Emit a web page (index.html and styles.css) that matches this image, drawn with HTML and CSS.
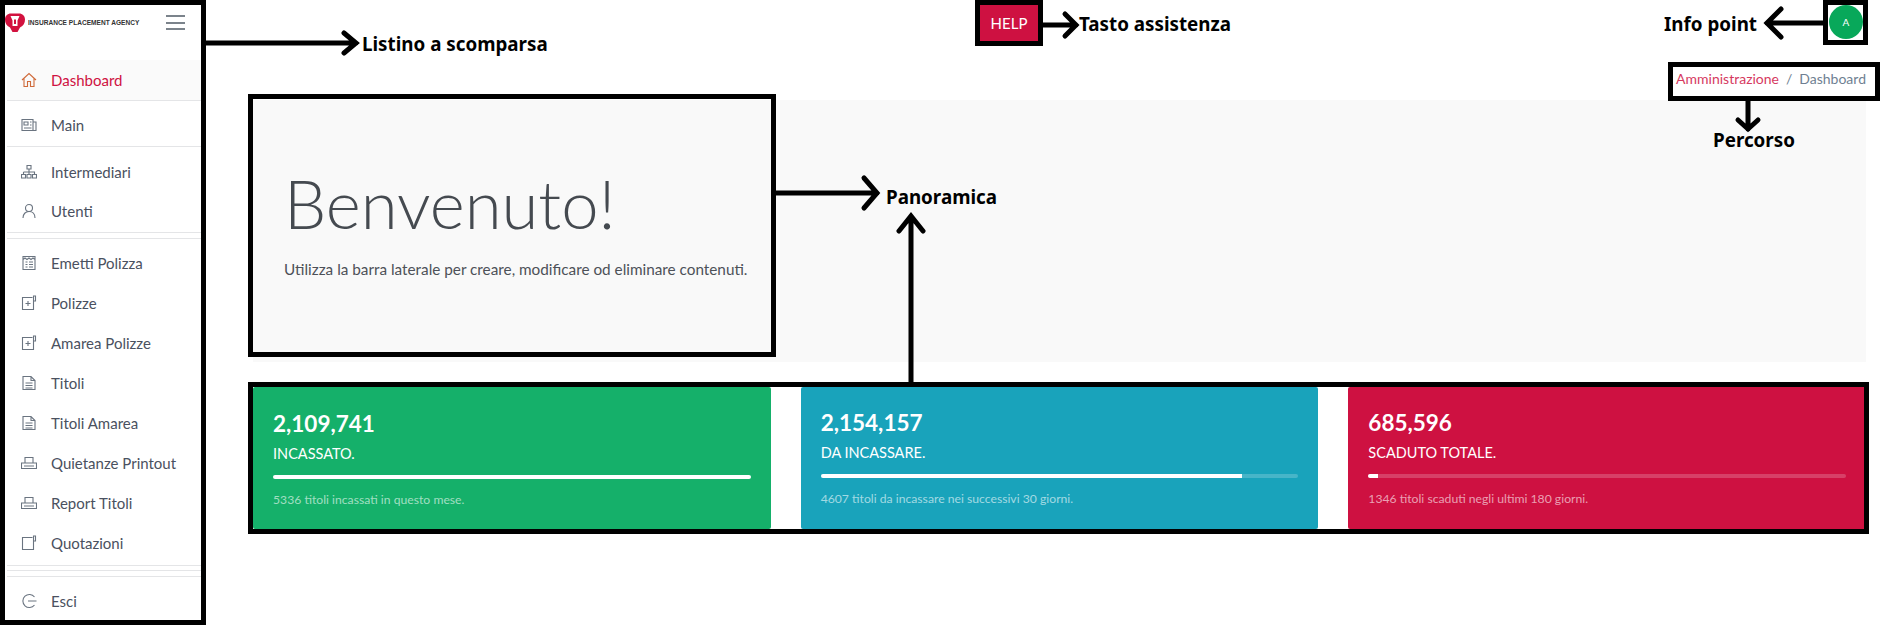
FILE: index.html
```html
<!DOCTYPE html>
<html lang="it">
<head>
  <meta charset="UTF-8" />
  <title>Dashboard</title>
  <link rel="stylesheet" href="styles.css">
</head>
<body>

  <div class="app">
    <aside class="sidebar">
      <div class="brand">
        <svg class="brand-logo" viewBox="0 0 20 20"><path fill="#d2123f" d="M6 .5h8c3.500 0 6 2.500 6 6 0 3.500-1.500 6.500-5 8l-2.500 4.500h-5L5 14.500c-3.500-1.500-5-4.500-5-8 0-3.500 2.500-6 6-6z"/><path fill="#fff" d="M5.500 3h9l-2 4.500V13h-5V7.500z"/><path fill="#d2123f" d="M9 6.500h2V11H9z"/></svg>
        <span class="brand-name">INSURANCE PLACEMENT AGENCY</span>
        <span class="burger"><i></i><i></i><i></i></span>
      </div>

      <nav class="menu">
        <a class="item active section-end">
          <svg class="icon" viewBox="0 0 16 16"><path d="M1 8l7-6.500L15 8M3 6.500V14.500h3.500V9.500h3V14.500H13V6.500"/></svg>
          Dashboard
        </a>
        <a class="item main section-end">
          <svg class="icon" viewBox="0 0 16 16"><path d="M1 2.500h11v11H1zM12 5h3v8.500h-3M3 5h4v3H3zM9 5h1.500M9 8h1.500M3 11h7.500"/></svg>
          Main
        </a>
        <a class="item users-first">
          <svg class="icon" viewBox="0 0 16 16"><path d="M6 1.500h4v3.500H6zM8 5v3M2.500 8h11v2M2.500 8v2M8 8v2M.5 10.500h4v3.500h-4zM6 10.500h4v3.500H6zM11.500 10.500h4v3.500h-4z"/></svg>
          Intermediari
        </a>
        <a class="item users-last section-end">
          <svg class="icon" viewBox="0 0 16 16"><circle cx="8" cy="5" r="3.500"/><path d="M2 15c0-4 2.500-6.500 6-6.500s6 2.500 6 6.500"/></svg>
          Utenti
        </a>
        <div class="rule"></div>
        <a class="item first">
          <svg class="icon" viewBox="0 0 16 16"><path d="M2 1.500h12v13H2zM2 4.500l2-1.500 2 1.500 2-1.500 2 1.500 2-1.500 2 1.500M4.500 7h2M8 7h4M4.500 9.500h2M8 9.500h4M4.500 12h2M8 12h4"/></svg>
          Emetti Polizza
        </a>
        <a class="item">
          <svg class="icon" viewBox="0 0 16 16"><path d="M11.500 2.500h-10v12h11V6M12.500 1h2v5h-2zM7 6v5M4.500 8.500h5"/></svg>
          Polizze
        </a>
        <a class="item">
          <svg class="icon" viewBox="0 0 16 16"><path d="M11.500 2.500h-10v12h11V6M12.500 1h2v5h-2zM7 6v5M4.500 8.500h5"/></svg>
          Amarea Polizze
        </a>
        <a class="item">
          <svg class="icon" viewBox="0 0 16 16"><path d="M2 1.500h8l4 4v9H2zM10 1.500v4h4M4.500 8h7M4.500 10.500h7M4.500 13h7"/></svg>
          Titoli
        </a>
        <a class="item">
          <svg class="icon" viewBox="0 0 16 16"><path d="M2 1.500h8l4 4v9H2zM10 1.500v4h4M4.500 8h7M4.500 10.500h7M4.500 13h7"/></svg>
          Titoli Amarea
        </a>
        <a class="item">
          <svg class="icon" viewBox="0 0 16 16"><path d="M4 8V2.500h8V8M.5 8h15v5.500H.5zM3 11h10"/></svg>
          Quietanze Printout
        </a>
        <a class="item">
          <svg class="icon" viewBox="0 0 16 16"><path d="M4 8V2.500h8V8M.5 8h15v5.500H.5zM3 11h10"/></svg>
          Report Titoli
        </a>
        <a class="item">
          <svg class="icon" viewBox="0 0 16 16"><path d="M11.500 2.500h-10v12h11V6M12.500 1h2v5h-2z"/></svg>
          Quotazioni
        </a>
        <div class="rule r-a"></div>
        <div class="rule r-b"></div>
        <div class="rule r-c"></div>
        <a class="item logout">
          <svg class="icon" viewBox="0 0 16 16"><path d="M13.500 4A6.500 6.500 0 1 0 13.500 12M7 8h8.500"/></svg>
          Esci
        </a>
      </nav>
    </aside>

    <div class="page">
      <header class="topbar">
        <button class="help">HELP</button>
        <span class="avatar">A</span>
      </header>

      <ol class="crumbs">
        <li class="crumb-link">Amministrazione</li>
        <li class="crumb-sep">/</li>
        <li>Dashboard</li>
      </ol>

      <section class="jumbo">
        <h1>Benvenuto!</h1>
        <p>Utilizza la barra laterale per creare, modificare od eliminare contenuti.</p>
      </section>

      <section class="stats">
        <div class="stat green">
          <div class="stat-value">2,109,741</div>
          <div class="stat-label">INCASSATO.</div>
          <div class="bar"><div class="bar-fill" style="width: 100%"></div></div>
          <small>5336 titoli incassati in questo mese.</small>
        </div>
        <div class="stat blue">
          <div class="stat-value">2,154,157</div>
          <div class="stat-label">DA INCASSARE.</div>
          <div class="bar"><div class="bar-fill" style="width: 88.3%"></div></div>
          <small>4607 titoli da incassare nei successivi 30 giorni.</small>
        </div>
        <div class="stat red">
          <div class="stat-value">685,596</div>
          <div class="stat-label">SCADUTO TOTALE.</div>
          <div class="bar"><div class="bar-fill" style="width: 2%"></div></div>
          <small>1346 titoli scaduti negli ultimi 180 giorni.</small>
        </div>
      </section>
    </div>
  </div>

  <!-- annotation layer drawn over the screenshot -->
  <div class="mark mark-sidebar"></div>
  <div class="mark mark-help"></div>
  <div class="mark mark-avatar"></div>
  <div class="mark mark-crumbs"></div>
  <div class="mark mark-jumbo"></div>
  <div class="mark mark-stats"></div>

  <svg class="arrows" width="1880" height="625" viewBox="0 0 1880 625">
    <path d="M206 43H356M344 33l12 10-12 10"/>
    <path d="M1043 25H1076M1065 14l11 11-11 11"/>
    <path d="M1823 23H1767M1781 9l-14 14 14 14"/>
    <path d="M1748 100V129M1738 120l10 9 10-9"/>
    <path d="M776 193H877M864 178l13 15-13 15"/>
    <path d="M911 382V216M899 231l12-15 12 15"/>
  </svg>

  <span class="note note-sidebar">Listino a scomparsa</span>
  <span class="note note-help">Tasto assistenza</span>
  <span class="note note-info">Info point</span>
  <span class="note note-path">Percorso</span>
  <span class="note note-jumbo">Panoramica</span>

</body>
</html>
```

FILE: styles.css
```css
* {
  box-sizing: border-box;
}

html, body {
  margin: 0;
  height: 625px;
  overflow: hidden;
}

body {
  position: relative;
  font-family: Lato, "Noto Sans", Arial, sans-serif;
  color: #4a5160;
  background: #fff;
}

.app {
  display: flex;
  height: 625px;
}

/* sidebar */
.sidebar {
  width: 206px;
  flex: none;
  padding-left: 7px;
}

.brand {
  display: flex;
  align-items: center;
  height: 60px;
  margin-left: -2px;
  padding-bottom: 15px;
}

.brand-logo {
  width: 20px;
  height: 20px;
  flex: none;
}

.brand-name {
  width: 115px;
  margin-left: 3px;
  font-family: "Liberation Sans", Arial, sans-serif;
  font-size: 8px;
  font-weight: 700;
  color: #333;
  white-space: nowrap;
  transform-origin: left center;
  transform: scaleX(.82);
}

.burger {
  display: flex;
  flex-direction: column;
  gap: 4.500px;
  width: 19px;
  margin-left: 23px;
}

.burger i {
  display: block;
  height: 2px;
  background: #7b838b;
}

.menu {
  display: flex;
  flex-direction: column;
  width: 199px;
}

.item {
  display: flex;
  align-items: center;
  gap: 14px;
  height: 40px;
  padding-left: 14px;
  font-size: 15px;
  color: #4a5160;
  white-space: nowrap;
}

.item .icon {
  width: 16px;
  height: 16px;
  flex: none;
  fill: none;
  stroke: #6a7480;
  stroke-width: 1.1;
}

.item.active {
  height: 41px;
  background: #fafafa;
  color: #cf1242;
}

.item.active .icon {
  stroke: #cf6a3a;
}

.section-end {
  border-bottom: 1px solid #e4e5e7;
}

.item.main {
  height: 46px;
  padding-top: 2px;
}

.users-first {
  height: 50px;
}

.users-last {
  height: 36px;
  padding-bottom: 8px;
}

.rule {
  height: 1px;
  margin-top: 5px;
  background: #e4e5e7;
}

.item.first {
  margin-top: 4px;
}

.rule.r-a {
  margin-top: 2px;
}

.rule.r-b {
  margin-top: 4px;
}

.item.logout {
  height: 48px;
}

/* main column */
.page {
  flex: 1;
  min-width: 0;
  padding: 0 14px 0 47px;
}

.topbar {
  position: relative;
  height: 62px;
}

.help {
  position: absolute;
  left: 727px;
  top: 5px;
  width: 58px;
  height: 36px;
  border: none;
  background: #ce1141;
  color: #fff;
  font-family: inherit;
  font-size: 15px;
}

.avatar {
  position: absolute;
  right: 3px;
  top: 5px;
  width: 34px;
  height: 34px;
  border-radius: 50%;
  background: #08a85a;
  color: #fff;
  font-size: 10px;
  display: flex;
  align-items: center;
  justify-content: center;
}

.crumbs {
  display: flex;
  justify-content: flex-end;
  align-items: center;
  gap: 7px;
  height: 38px;
  margin: 0;
  padding: 0 0 6px;
  list-style: none;
  font-size: 14px;
  color: #6f7f92;
}

.crumb-link {
  color: #d63a5f;
}

.jumbo {
  height: 262px;
  padding: 58px 32px 0 31px;
  background: #f9f9f9;
}

.jumbo h1 {
  margin: 0;
  font-size: 67px;
  font-weight: 300;
  line-height: 90px;
  color: #454a50;
}

.jumbo p {
  margin: 12px 0 0;
  font-size: 15.300px;
  color: #4d5158;
}

.stats {
  display: grid;
  grid-template-columns: repeat(3, 1fr);
  gap: 30px;
  margin-top: 25px;
}

.stat {
  height: 142px;
  padding: 23px 20px 0;
  color: #fff;
  border-radius: 2px;
}

.green { background: #15b06a; padding-top: 24px; }
.blue  { background: #19a3bb; }
.red   { background: #ce1141; }

.stat-value {
  font-size: 22.500px;
  font-weight: 700;
  line-height: 26px;
}

.stat-label {
  margin-top: 6px;
  font-size: 14.500px;
  line-height: 22px;
}

.bar {
  height: 4px;
  margin-top: 10px;
  border-radius: 2px;
  background: rgba(255, 255, 255, .2);
  overflow: hidden;
}

.bar-fill {
  height: 100%;
  background: #fff;
}

.stat small {
  display: block;
  margin-top: 13px;
  font-size: 12.200px;
  color: rgba(255, 255, 255, .6);
}

/* annotations */
.mark {
  position: absolute;
  border: 5px solid #000;
  pointer-events: none;
}

.mark-sidebar { left: 0; top: 0; width: 206px; height: 625px; }
.mark-help { left: 975px; top: 0; width: 68px; height: 46px; }
.mark-avatar { left: 1823px; top: 0; width: 45px; height: 45px; }
.mark-crumbs { left: 1668px; top: 62px; width: 212px; height: 39px; }
.mark-jumbo { left: 248px; top: 94px; width: 528px; height: 263px; }
.mark-stats { left: 248px; top: 382px; width: 1621px; height: 152px; }

.arrows {
  position: absolute;
  left: 0;
  top: 0;
  fill: none;
  stroke: #000;
  stroke-width: 5;
  stroke-linecap: round;
}

.note {
  position: absolute;
  font-family: "Noto Sans", Arial, sans-serif;
  font-size: 18.800px;
  font-weight: 700;
  color: #000;
  line-height: 24px;
  white-space: nowrap;
}

.note-sidebar { left: 362px; top: 32px; }
.note-help { left: 1079px; top: 12px; }
.note-info { left: 1664px; top: 12px; }
.note-path { left: 1713px; top: 128px; }
.note-jumbo { left: 886px; top: 185px; }
```
